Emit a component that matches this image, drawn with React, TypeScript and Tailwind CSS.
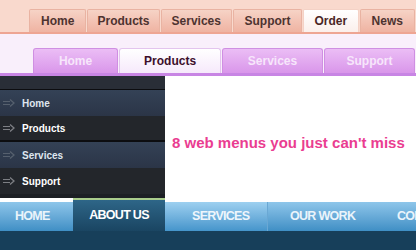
const topTabs = ["Home", "Products", "Services", "Support", "Order", "News"];
const topWidths = ["w-[58px]", "w-[73px]", "w-[72px]", "w-[70px]", "w-[56px]", "w-[56px]"];

const purpleTabs = ["Home", "Products", "Services", "Support"];
const purpleWidths = ["w-[86px]", "w-[103px]", "w-[102px]", "w-[92px]"];

const sideItems = [
  { label: "Home", bright: false, blue: true },
  { label: "Products", bright: true, blue: false },
  { label: "Services", bright: false, blue: true },
  { label: "Support", bright: true, blue: false },
];

const Arrow = ({ dim }: { dim: boolean }) => (
  <svg width="13" height="8" viewBox="0 0 13 8" className="shrink-0">
    <path d="M0 2.5h7M0 5.5h7" stroke={dim ? "#56606e" : "#7d7f84"} strokeWidth="1.2" />
    <path d="M7 0.5l4 3.5-4 3.5" fill="none" stroke={dim ? "#56606e" : "#7d7f84"} strokeWidth="1.3" />
  </svg>
);

export default function App() {
  return (
    <div className="w-[416px] h-[250px] overflow-hidden bg-white font-['Liberation_Sans',Arial,sans-serif]">
      {/* peach tab menu */}
      <div className="h-[32px] bg-[#f9d9cd] flex items-end pl-[29px]">
        {topTabs.map((t, i) => (
          <div
            key={t}
            className={`${topWidths[i]} h-[23px] mr-[1px] flex items-center justify-center rounded-t-[2px] border border-b-0 text-[12px] font-bold ${
              t === "Order"
                ? "bg-gradient-to-b from-white to-[#fbefeb] border-[#f4d2c6] text-[#4a2626]"
                : "bg-gradient-to-b from-[#f6d3c6] to-[#efb3a2] border-[#e9b3a2] text-[#4d3330]"
            }`}
          >
            {t}
          </div>
        ))}
      </div>
      <div className="h-[2px] bg-[#eea593]" />

      {/* purple tab menu */}
      <div className="bg-[#f9effb] pt-[14px] pl-[33px] flex border-b-[3px] border-[#c885e4]">
        {purpleTabs.map((t, i) => (
          <div
            key={t}
            className={`${purpleWidths[i]} h-[25px] mr-[1px] flex items-center justify-center rounded-t-[3px] border border-b-0 text-[12px] font-bold ${
              t === "Products"
                ? "bg-gradient-to-b from-white to-[#f6e9fb] border-[#e3c4ee] text-[#3d0f2c]"
                : "bg-gradient-to-b from-[#ebbdf5] to-[#d996ea] border-[#cf8fe2] text-[#f7e6fb]"
            }`}
          >
            {t}
          </div>
        ))}
      </div>

      {/* sidebar + content */}
      <div className="flex h-[122px]">
        <div className="w-[165px] bg-[#1c1f24] flex flex-col">
          <div className="h-[14px] bg-[#292e37] border-b border-[#0c0d10]" />
          {sideItems.map((s, i) => (
            <div
              key={s.label}
              className={`h-[26px] flex items-center gap-[6px] pl-[3px] text-[10px] font-bold ${
                s.blue
                  ? "bg-gradient-to-b from-[#344256] to-[#2b3547] text-[#dfe6ef]"
                  : "bg-[#23262b] text-white"
              } ${i === 1 ? "border-b-2 border-[#0c0d10]" : ""} ${s.label === "Services" ? "text-[#b7c6d8]" : ""}`}
            >
              <Arrow dim={s.blue} />
              {s.label}
            </div>
          ))}
        </div>
        <div className="flex-1 flex items-center pl-[7px] pt-[12px]">
          <span className="text-[15px] font-bold text-[#ea3d91] whitespace-nowrap">8 web menus you just can't miss</span>
        </div>
      </div>

      {/* blue bottom menu */}
      <div className="flex h-[33px] text-[12.5px] font-bold tracking-[-0.7px]">
        <div className="w-[73px] mt-[4px] flex items-center pl-[15px] bg-gradient-to-b from-[#8ec6ea] to-[#3f8fc5] text-[#eaf4fb]">
          HOME
        </div>
        <div className="w-[92px] border-t-2 border-[#a9cc8c] bg-gradient-to-b from-[#2e6688] to-[#1a4562] flex justify-center pt-[6px] text-white">
          ABOUT US
        </div>
        <div className="w-[103px] mt-[4px] flex items-center pl-[27px] bg-gradient-to-b from-[#9dd0f0] to-[#4595cb] border-r border-[#6aa8d4] text-[#eef6fc]">
          SERVICES
        </div>
        <div className="w-[102px] mt-[4px] flex items-center pl-[22px] bg-gradient-to-b from-[#8ec6ea] to-[#3f8fc5] text-[#eaf4fb]">
          OUR WORK
        </div>
        <div className="flex-1 mt-[4px] flex items-center pl-[27px] bg-gradient-to-b from-[#8ec6ea] to-[#3f8fc5] text-[#eaf4fb] whitespace-nowrap overflow-hidden">
          CONTACT
        </div>
      </div>
      <div className="h-[20px] bg-[#173f5a]" />
    </div>
  );
}
